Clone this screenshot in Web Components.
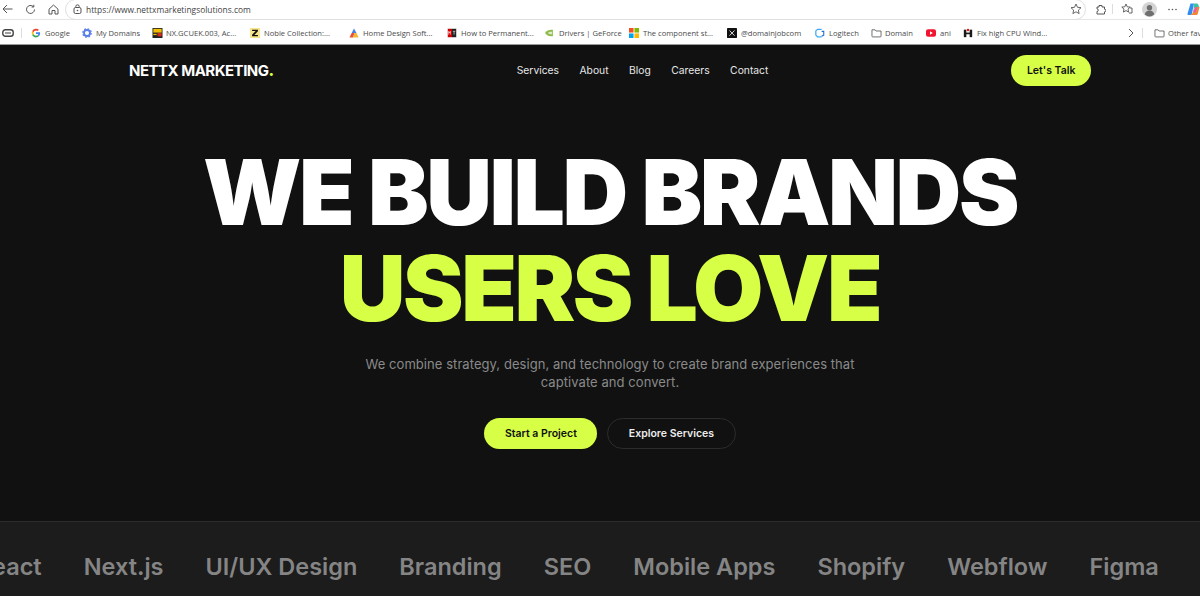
<!DOCTYPE html>
<html lang="en">
<head>
<meta charset="utf-8">
<title>Nettx Marketing</title>
<style>
  html, body { margin: 0; height: 596px; overflow: hidden; background: #111; }
  body { display: flex; flex-direction: column; font-family: Inter, sans-serif; }
</style>
</head>
<body>
<browser-bar></browser-bar>
<site-nav></site-nav>
<site-hero></site-hero>
<tech-strip></tech-strip>

<script>
// Small helper: every component just sets its markup in an open shadow root
class Base extends HTMLElement {
  constructor() {
    super();
    this.attachShadow({ mode: "open" }).innerHTML = this.markup();
  }
  markup() { return ""; }
}

const ICONS = {
  google: `<svg viewBox="0 0 16 16" width="10" height="10"><path d="M14.500 8.200c0-.5 0-1-.1-1.400H8v2.700h3.700a3.200 3.200 0 0 1-1.400 2.100l2.200 1.700c1.300-1.200 2-3 2-5.100z" fill="#4285f4"/><path d="M8 15c1.900 0 3.400-.6 4.500-1.700l-2.200-1.700c-.6.400-1.400.7-2.300.7-1.800 0-3.300-1.200-3.800-2.800L1.900 11.200C3 13.500 5.300 15 8 15z" fill="#34a853"/><path d="M4.200 9.500a4.200 4.200 0 0 1 0-2.900L1.900 4.800a7 7 0 0 0 0 6.400z" fill="#fbbc05"/><path d="M8 3.800c1 0 1.900.3 2.600 1l2-2A7 7 0 0 0 1.900 4.800l2.300 1.800C4.700 5 6.200 3.800 8 3.800z" fill="#ea4335"/></svg>`,
  gear: `<svg viewBox="0 0 16 16" width="10" height="10"><circle cx="8" cy="8" r="4.800" fill="none" stroke="#5b7fe6" stroke-width="3"/><circle cx="8" cy="8" r="6.800" fill="none" stroke="#5b7fe6" stroke-width="2" stroke-dasharray="2.700 2.640"/></svg>`,
  save: `<svg viewBox="0 0 12 12" width="11" height="10"><rect width="12" height="12" fill="#222"/><rect x="1" y="1" width="10" height="4.500" fill="#f0c000"/><rect x="6" y="6" width="5" height="4" fill="#d32a1e"/><rect x="1" y="7" width="4" height="1.500" fill="#f0c000"/></svg>`,
  z: `<svg viewBox="0 0 12 12" width="10" height="10"><rect width="12" height="12" fill="#f6e58a"/><path d="M2.500 2h7v1.800L5.200 8.400h4.300V10h-7V8.200l4.300-4.600H2.500z" fill="#111"/></svg>`,
  home: `<svg viewBox="0 0 12 12" width="10" height="10"><path d="M6 .5 9 6H3.200z" fill="#4a7fe0"/><path d="M3.200 6h3.300L5 11.500H.5z" fill="#e8503a"/><path d="M6.500 6H9l2.500 5.500H5z" fill="#f2b632"/></svg>`,
  mt: `<svg viewBox="0 0 12 12" width="10" height="10"><rect width="12" height="12" fill="#eee"/><rect x="1" y="1" width="5" height="10" fill="#c00"/><rect x="6" y="1" width="5" height="10" fill="#222"/><path d="M2 8V4l1 2 1-2v4M7 4h3M8.500 4v4" stroke="#fff" stroke-width=".7" fill="none"/></svg>`,
  nvidia: `<svg viewBox="0 0 14 10" width="11" height="8"><path d="M0 5c2-3 6-4.500 10-4v8C6 10 2 8 0 5z" fill="#8dbb4a"/><path d="M3.500 5C5 3.500 7 3 9 3.500v3C7 7 5 6.500 3.500 5z" fill="#dcebc4"/></svg>`,
  ms: `<svg viewBox="0 0 11 11" width="10" height="10"><rect width="5" height="5" fill="#f25022"/><rect x="6" width="5" height="5" fill="#7fba00"/><rect y="6" width="5" height="5" fill="#00a4ef"/><rect x="6" y="6" width="5" height="5" fill="#ffb900"/></svg>`,
  x: `<svg viewBox="0 0 12 12" width="10" height="10"><rect width="12" height="12" rx="1" fill="#111"/><path d="M3 3l6 6.200M9 3 3 9.200" stroke="#eee" stroke-width="1.100" fill="none"/></svg>`,
  logi: `<svg viewBox="0 0 12 12" width="10" height="10"><path d="M8 1.500H3L1 3.500v5l2 2h5" fill="none" stroke="#3fa9f5" stroke-width="1.500"/><path d="M8 4h2.500v4.500L8 10" fill="none" stroke="#1f6fd0" stroke-width="1.300"/></svg>`,
  folder: `<svg viewBox="0 0 12 11" width="11" height="10"><path d="M1 9V2h3.500l1 1.300H11V9a.8.8 0 0 1-.8.800H1.800A.8.8 0 0 1 1 9z" fill="none" stroke="#555" stroke-width=".9"/></svg>`,
  yt: `<svg viewBox="0 0 12 9" width="10" height="8"><rect width="12" height="9" rx="2.500" fill="#f0142f"/><path d="M4.800 2.500v4l3.400-2z" fill="#fff"/></svg>`,
  fix: `<svg viewBox="0 0 12 12" width="10" height="10"><rect x="1" y="2" width="3" height="9" fill="#1a1a1a"/><rect x="8" y="2" width="3" height="9" fill="#1a1a1a"/><rect x="3" y="5.500" width="6" height="2" fill="#1a1a1a"/><circle cx="6" cy="2.500" r="1.500" fill="#e01b1b"/></svg>`
};

class BookmarkItem extends Base {
  markup() {
    return `<style>
      :host { display: flex; align-items: center; white-space: nowrap; flex: none; }
      .ic { width: 14px; flex: none; display: flex; align-items: center; }
      svg { display: block; }
      span { font: 7.600px "Open Sans", sans-serif; color: #4a4a4a; }
    </style><div class="ic">${ICONS[this.getAttribute("icon")] || ""}</div><span><slot></slot></span>`;
  }
}
customElements.define("bookmark-item", BookmarkItem);

class BrowserBar extends Base {
  markup() {
    // icon, label, width of the slot up to the next bookmark
    const marks = [
      ["google", "Google", 51], ["gear", "My Domains", 70], ["save", "NX.GCUEK.003, Ac...", 98],
      ["z", "Noble Collection:...", 99], ["home", "Home Design Soft...", 98], ["mt", "How to Permanent...", 98],
      ["nvidia", "Drivers | GeForce", 84], ["ms", "The component st...", 98], ["x", "@domainjobcom", 88],
      ["logi", "Logitech", 56], ["folder", "Domain", 55], ["yt", "ani", 37], ["fix", "Fix high CPU Wind...", 165]
    ];
    const items = marks.map(([icon, label, w]) =>
      `<bookmark-item icon="${icon}" style="width:${w}px">${label}</bookmark-item>`).join("");
    return `<style>
      :host { display: block; flex: none; height: 45px; box-sizing: border-box; background: #fff; border-bottom: 1px solid #9a9a9a; color: #555; overflow: hidden; }
      svg { display: block; flex: none; }
      .top { display: flex; align-items: center; height: 20px; padding: 0 0 0 2px; box-sizing: border-box; border-bottom: 1px solid #e6e6e6; }
      .nav { display: flex; align-items: center; gap: 12px; margin-top: -1px; }
      .url { flex: none; width: 1021px; height: 21px; margin: -1px 0 0 6px; box-sizing: border-box; border: 1px solid #dedede; border-radius: 11px; display: flex; align-items: center; padding: 0 3px 0 7px; gap: 4px; }
      .url span { font: 8.400px "Open Sans", sans-serif; color: #444; flex: 1; }
      .tools { display: flex; align-items: center; margin-left: 9px; margin-top: -1px; }
      .sep { width: 1px; height: 10px; background: #ddd; flex: none; }
      .marks { display: flex; align-items: center; height: 24px; padding: 1px 0 0 2px; white-space: nowrap; box-sizing: border-box; }
      .list { display: flex; align-items: center; margin-left: 9px; flex: none; width: 1097px; }
    </style>
    <div class="top">
      <div class="nav">
        <svg width="11" height="10" viewBox="0 0 11 10"><path d="M10.500 5H1M5 1 1 5l4 4" fill="none" stroke="#555" stroke-width="1"/></svg>
        <svg width="11" height="11" viewBox="0 0 11 11"><path d="M9.500 5.500a4 4 0 1 1-1.200-2.900M8.800 .8v2.200H6.600" fill="none" stroke="#555" stroke-width="1"/></svg>
        <svg width="11" height="11" viewBox="0 0 11 11"><path d="M1 5.200 5.500 1 10 5.200V10H7V6.500H4V10H1z" fill="none" stroke="#555" stroke-width="1"/></svg>
      </div>
      <div class="url">
        <svg width="9" height="10" viewBox="0 0 9 10"><rect x="1" y="3.500" width="7" height="6" rx="1.500" fill="none" stroke="#555"/><path d="M2.800 3.500V2.500a1.700 1.700 0 0 1 3.400 0v1" fill="none" stroke="#555"/><circle cx="4.500" cy="6.500" r=".8" fill="#555"/></svg>
        <span>https://www.nettxmarketingsolutions.com</span>
        <svg width="12" height="12" viewBox="0 0 12 12"><path d="M6 1l1.500 3.300 3.500.4-2.600 2.400.7 3.500L6 8.800l-3.100 1.800.7-3.500L1 4.700l3.500-.4z" fill="none" stroke="#555" stroke-width=".9"/></svg>
      </div>
      <div class="tools">
        <svg width="11" height="11" viewBox="0 0 11 11"><path d="M4 1.500h3v1.500h2.500v2.200a1.300 1.300 0 0 1 0 2.600V10H2V7.500a1.300 1.300 0 0 0 0-2.600V3H4z" fill="none" stroke="#555"/></svg>
        <span class="sep" style="margin:0 8px 0 6px"></span>
        <svg width="12" height="12" viewBox="0 0 12 12" style="margin-right:9px"><path d="M5 1l1.200 2.800 3 .3-2.200 2 .6 3L5 7.600 2.400 9.100l.6-3-2.200-2 3-.3z" fill="none" stroke="#555" stroke-width=".9"/><path d="M9 5h2v5H8" fill="none" stroke="#555" stroke-width=".9"/></svg>
        <svg width="15" height="15" viewBox="0 0 15 15" style="margin-right:11px"><circle cx="7.500" cy="7.500" r="7.500" fill="#d4d4d4"/><circle cx="7.500" cy="5.800" r="2.700" fill="#6f6f6f"/><path d="M2.800 12.500a4.700 4 0 0 1 9.400 0 7.500 7.500 0 0 1-9.400 0z" fill="#6f6f6f"/></svg>
        <svg width="9" height="3" viewBox="0 0 9 3" style="margin-right:10px"><circle cx="1" cy="1.500" r=".8" fill="#555"/><circle cx="4.500" cy="1.500" r=".8" fill="#555"/><circle cx="8" cy="1.500" r=".8" fill="#555"/></svg>
        <svg width="13" height="14" viewBox="0 0 13 14"><path d="M3.500 1.500h3.500L5 11.500c-.3 1-1 1.500-2 1.500H1.500C.7 13 .3 12.500.5 11.700z" fill="#2f8df0"/><path d="M7 1.500h2.500c1 0 1.700.6 2 1.500L12 5H8.500L6.500 8z" fill="#3fc0a0"/><path d="M8.500 5H12.500l-1.600 6.500c-.3 1-1 1.500-2 1.500H3l2-1z" fill="#f0873a"/><path d="M6 9l2.500-4 2 .5L8 11z" fill="#e85ba0"/></svg>
      </div>
    </div>
    <div class="marks">
      <svg width="12" height="8" viewBox="0 0 12 8"><rect x=".8" y=".8" width="10.400" height="6.400" rx="2.500" fill="none" stroke="#444" stroke-width="1.400"/><rect x="3" y="3.200" width="6" height="1.600" fill="#888"/></svg>
      <span class="sep" style="margin-left:7px"></span>
      <div class="list">${items}</div>
      <svg width="6" height="10" viewBox="0 0 6 10"><path d="M1 1l4 4-4 4" fill="none" stroke="#555"/></svg>
      <span class="sep" style="margin:0 11px 0 8px"></span>
      <bookmark-item icon="folder" style="margin-right:-10px">Other fav</bookmark-item>
    </div>`;
  }
}
customElements.define("browser-bar", BrowserBar);

class SiteNav extends Base {
  markup() {
    return `<style>
      :host { display: flex; flex: none; align-items: center; justify-content: space-between; height: 50px; padding: 0 109px 0 129px; color: #fff; }
      .logo { font-size: 15px; font-weight: 700; letter-spacing: -.5px; }
      .logo b { color: #d6ff45; }
      nav { display: flex; gap: 20.500px; font-size: 10.300px; font-weight: 400; color: #e6e6e6; }
      a { color: inherit; text-decoration: none; }
    </style>
    <div class="logo">NETTX MARKETING<b>.</b></div>
    <nav><a>Services</a><a>About</a><a>Blog</a><a>Careers</a><a>Contact</a></nav>
    <pill-button kind="primary" size="small">Let's Talk</pill-button>`;
  }
}
customElements.define("site-nav", SiteNav);

class PillButton extends Base {
  markup() {
    const primary = this.getAttribute("kind") === "primary";
    return `<style>
      :host { display: inline-flex; align-items: center; justify-content: center; box-sizing: border-box; height: 31px; padding: 0 20.500px; border-radius: 16px; font-size: 10.500px; font-weight: 600;
        background: ${primary ? "#d6ff45" : "transparent"}; color: ${primary ? "#111" : "#ececec"}; border: ${primary ? "0" : "1px solid #2c2c2c"}; white-space: nowrap; }
      :host([size="small"]) { padding: 0 15.500px; }
    </style><slot></slot>`;
  }
}
customElements.define("pill-button", PillButton);

class SiteHero extends Base {
  markup() {
    return `<style>
      :host { display: flex; flex: 1; flex-direction: column; align-items: center; text-align: center; padding: 50px 0 0 20px; box-sizing: border-box; min-height: 0; }
      h1 { margin: 0; font-size: 91px; line-height: 95.500px; font-weight: 900; letter-spacing: -2.450px; color: #fff; }
      h1 span { display: block; color: #d6ff45; }
      p { margin: 19px 0 0; width: 520px; font-size: 13px; line-height: 18px; color: #8a8a8a; letter-spacing: .06px; }
      .cta { display: flex; gap: 10px; margin-top: 27px; }
    </style>
    <h1>WE BUILD BRANDS<span>USERS LOVE</span></h1>
    <p>We combine strategy, design, and technology to create brand experiences that captivate and convert.</p>
    <div class="cta"><pill-button kind="primary">Start a Project</pill-button><pill-button>Explore Services</pill-button></div>`;
  }
}
customElements.define("site-hero", SiteHero);

class TechStrip extends Base {
  markup() {
    const names = ["React", "Next.js", "UI/UX Design", "Branding", "SEO", "Mobile Apps", "Shopify", "Webflow", "Figma", "Motion"];
    return `<style>
      :host { display: block; flex: none; height: 75px; box-sizing: border-box; padding-top: 15px; background: #1c1c1c; border-top: 1px solid #2d2d2d; overflow: hidden; }
      .track { display: flex; align-items: center; height: 100%; gap: 42px; width: max-content; transform: translateX(-23px); font-size: 23.500px; font-weight: 600; color: #858585; }
    </style>
    <div class="track">${names.map(n => `<span>${n}</span>`).join("")}</div>`;
  }
}
customElements.define("tech-strip", TechStrip);
</script>
</body>
</html>
